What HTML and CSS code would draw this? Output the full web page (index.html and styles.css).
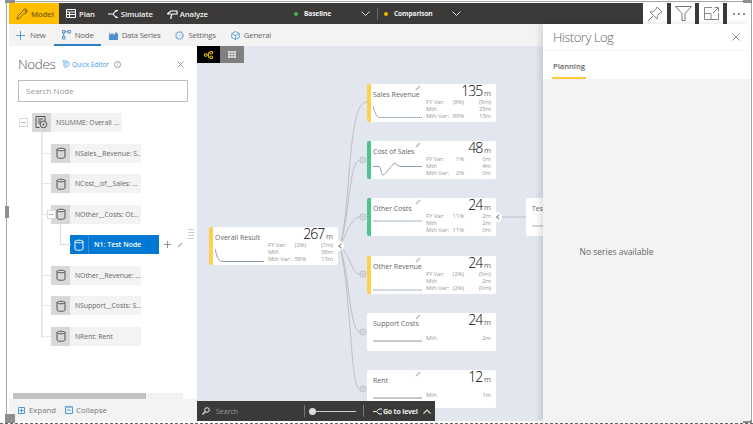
FILE: index.html
```html
<!DOCTYPE html>
<html lang="en">
<head>
    <meta charset="UTF-8">
    <title>Model - History Log</title>
    <link rel="stylesheet" href="styles.css">
</head>
<body>
<svg class="defs" width="0" height="0">
    <symbol id="cyl" viewBox="0 0 10 12">
        <path d="M1 2.5C1 .8 9 .8 9 2.5V10C9 11.7 1 11.7 1 10ZM1 2.5C1 4.2 9 4.2 9 2.5" fill="none" stroke="currentColor" stroke-width="1"/>
    </symbol>
    <symbol id="pen" viewBox="0 0 6 6">
        <path d="M.5 5.5L1 4 4.5 .5 5.5 1.5 2 5Z" fill="#bbb"/>
    </symbol>
    <symbol id="add" viewBox="0 0 8 8">
        <circle cx="4" cy="4" r="3" fill="#e1e6ef" stroke="#b4b4b8" stroke-width=".8"/>
        <path d="M2.5 4H5.5M4 2.5V5.5" stroke="#b4b4b8" stroke-width=".6"/>
    </symbol>
</svg>

<div class="page">
    <span class="handle h-tl"></span>
    <span class="handle h-tr"></span>
    <span class="handle h-l"></span>
    <span class="handle h-bl"></span>
    <span class="handle h-br"></span>

    <div class="frame">
        <div class="topbar">
            <div class="menu">
                <div class="tab active">
                    <svg width="12" height="12" viewBox="0 0 12 12"><path d="M1 11L2 8 7 3C7 1.5 9 .5 10.5 1.2L9 3 9.5 3.8 11 2.5C11.5 4.5 9.5 6 8 5.5L3.5 10.5Z" fill="none" stroke="#6b5310" stroke-width=".9"/></svg>
                    <span>Model</span>
                </div>
                <div class="tab">
                    <svg width="10" height="9" viewBox="0 0 10 9"><path d="M.5 .5H9.5V8.5H.5ZM.5 3H9.5M.5 5.5H9.5M3.5 3V8.5" fill="none" stroke="#fff" stroke-width="1"/></svg>
                    <span>Plan</span>
                </div>
                <div class="tab">
                    <svg width="11" height="10" viewBox="0 0 11 10"><path d="M0 5H5M5 5L8 1.5H10M5 5L8 8.5H10M8 1.5V3M8 8.5V7" fill="none" stroke="#fff" stroke-width="1.1"/></svg>
                    <span>Simulate</span>
                </div>
                <div class="tab">
                    <svg width="11" height="10" viewBox="0 0 11 10"><path d="M0 5L4 2H10V5H5L4 8V10M4 5H1" fill="none" stroke="#fff" stroke-width="1.2"/></svg>
                    <span>Analyze</span>
                </div>
                <div class="scenario baseline">
                    <i class="dot green"></i><b>Baseline</b>
                    <svg width="9" height="5" viewBox="0 0 9 5"><path d="M.5 .5L4.5 4.5 8.5 .5" fill="none" stroke="#ddd"/></svg>
                </div>
                <div class="scenario comparison">
                    <i class="dot amber"></i><b>Comparison</b>
                    <svg width="9" height="5" viewBox="0 0 9 5"><path d="M.5 .5L4.5 4.5 8.5 .5" fill="none" stroke="#ddd"/></svg>
                </div>
            </div>
            <div class="actions">
                <div class="act">
                    <svg width="16" height="16" viewBox="0 0 16 16"><path d="M10 1L15 6 13.5 6.5 10.5 9.5 10 13 3 6 6.5 5.5 9.5 2.5ZM6 10L1 15" fill="none" stroke="#777" stroke-width=".9"/></svg>
                </div>
                <div class="act">
                    <svg width="17" height="15" viewBox="0 0 17 15"><path d="M.5 .5H16.5L10 7.5V14.5H7V7.5Z" fill="none" stroke="#777"/></svg>
                </div>
                <div class="act">
                    <svg width="15" height="13" viewBox="0 0 15 13"><path d="M8 .5H.5V12.5H14.5V6M.5 6.5H7V12.5M9 6L14.5 .5M10.5 .5H14.5V4.5" fill="none" stroke="#888"/></svg>
                </div>
                <div class="act">
                    <span class="dots"><i></i><i></i><i></i></span>
                </div>
            </div>
        </div>

        <div class="body">
            <div class="workspace">
                <div class="toolbar">
                    <div class="tool">
                        <svg width="9" height="9" viewBox="0 0 9 9"><path d="M4.5 0V9M0 4.5H9" stroke="#5b9bd5"/></svg>
                        <span>New</span>
                    </div>
                    <div class="tool on">
                        <svg width="9" height="10" viewBox="0 0 9 10"><path d="M.5 .5H3V3H.5ZM6 .5H8.5V3H6ZM.5 6.5H3V9H.5ZM1.7 3V6.5M3 1.7H6" fill="none" stroke="#3f86c7" stroke-width=".9"/></svg>
                        <span>Node</span>
                    </div>
                    <div class="tool">
                        <svg width="9" height="9" viewBox="0 0 9 9"><path d="M0 0V9H9V3L7 1 5 4 3 2 1 4Z" fill="#4f8fcb"/></svg>
                        <span>Data Series</span>
                    </div>
                    <div class="tool">
                        <svg width="9" height="9" viewBox="0 0 9 9"><circle cx="4.5" cy="4.5" r="3.5" fill="none" stroke="#69a3d8" stroke-width="1.6" stroke-dasharray="1.3 .6"/><circle cx="4.5" cy="4.5" r="1.2" fill="#cfe0f0"/></svg>
                        <span>Settings</span>
                    </div>
                    <div class="tool">
                        <svg width="9" height="9" viewBox="0 0 9 9"><path d="M4.5 .5L8.3 2.5V6.5L4.5 8.5 .7 6.5V2.5ZM.7 2.5L4.5 4.5 8.3 2.5M4.5 4.5V8.5" fill="none" stroke="#5b9bd5" stroke-width=".9"/></svg>
                        <span>General</span>
                    </div>
                </div>

                <div class="main">
                    <div class="nodes">
                        <div class="nodes-head">
                            <h2>Nodes</h2>
                            <svg class="quick-icon" width="8" height="8" viewBox="0 0 8 8"><path d="M0 1H5L7.5 4 5 7H2M1 3H5.5M1 5H4.5" fill="none" stroke="#3f9ae0" stroke-width=".8"/></svg>
                            <span class="quick">Quick Editor</span>
                            <span class="info">i</span>
                            <svg class="close" width="7" height="7" viewBox="0 0 7 7"><path d="M.5 .5L6.5 6.5M6.5 .5L.5 6.5" stroke="#888" stroke-width=".8"/></svg>
                        </div>
                        <div class="search-node">Search Node</div>

                        <div class="tree">
                            <div class="tn root">
                                <span class="toggle"></span>
                                <span class="ico">
                                    <svg width="13" height="13" viewBox="0 0 13 13"><path d="M1 .5H10V5M4.5 11.5H1V.5M3 3H8M3 5H6M3 7H5" fill="none" stroke="#555"/><circle cx="8.5" cy="8.5" r="3.3" fill="none" stroke="#555"/><circle cx="8.5" cy="8.5" r="1" fill="#555"/></svg>
                                </span>
                                <span class="lbl">NSUMME: Overall ...</span>
                            </div>
                            <div class="tn child">
                                <span class="ico"><svg width="10" height="12"><use href="#cyl"/></svg></span>
                                <span class="lbl">NSales__Revenue: S...</span>
                            </div>
                            <div class="tn child">
                                <span class="ico"><svg width="10" height="12"><use href="#cyl"/></svg></span>
                                <span class="lbl">NCost__of__Sales: ...</span>
                            </div>
                            <div class="tn child parent">
                                <span class="toggle"></span>
                                <span class="ico"><svg width="10" height="12"><use href="#cyl"/></svg></span>
                                <span class="lbl">NOther__Costs: Ot...</span>
                            </div>
                            <div class="tn leaf">
                                <span class="ico"><svg width="10" height="12"><use href="#cyl"/></svg></span>
                                <span class="lbl">N1: Test Node</span>
                                <svg class="leaf-add" width="7" height="7" viewBox="0 0 8 8"><path d="M4 0V8M0 4H8" stroke="#777" stroke-width=".9"/></svg>
                                <svg class="leaf-pen" width="6" height="6"><use href="#pen"/></svg>
                                <span class="grip"></span>
                            </div>
                            <div class="tn child">
                                <span class="ico"><svg width="10" height="12"><use href="#cyl"/></svg></span>
                                <span class="lbl">NOther__Revenue: ...</span>
                            </div>
                            <div class="tn child">
                                <span class="ico"><svg width="10" height="12"><use href="#cyl"/></svg></span>
                                <span class="lbl">NSupport__Costs: S...</span>
                            </div>
                            <div class="tn child last">
                                <span class="ico"><svg width="10" height="12"><use href="#cyl"/></svg></span>
                                <span class="lbl">NRent: Rent</span>
                            </div>
                        </div>

                        <div class="hscroll"><div class="thumb"></div></div>
                        <div class="nodes-foot">
                            <svg width="7" height="7" viewBox="0 0 7 7"><path d="M.5 .5H6.5V6.5H.5ZM3.5 1.5V5.5M1.5 3.5H5.5" fill="none" stroke="#4a9ad8"/></svg>
                            <span>Expand</span>
                            <svg class="foot-second" width="8" height="8" viewBox="0 0 8 8"><path d="M.5 .5H7.5V7.5H.5ZM2 4H6" fill="none" stroke="#4a9ad8"/><path d="M.5 .5H7.5V2H.5Z" fill="#8fc0e6"/></svg>
                            <span>Collapse</span>
                        </div>
                    </div>

                    <div class="canvas">
                        <div class="view-switch">
                            <span class="vs on">
                                <svg width="9" height="8" viewBox="0 0 9 8"><path d="M.5 2.8H3V5.2H.5ZM6 .5H8.5V2.8H6ZM6 5.2H8.5V7.5H6ZM3 4H4.5V1.7H6M4.5 4V6.3H6" fill="none" stroke="#f2c811" stroke-width=".9"/></svg>
                            </span>
                            <span class="vs">
                                <svg width="8" height="7" viewBox="0 0 8 7"><path d="M0 0H8V7H0Z" fill="#ddd"/><path d="M0 2.3H8M0 4.6H8M2.7 0V7M5.3 0V7" stroke="#808080" stroke-width=".5"/></svg>
                            </span>
                        </div>

                        <svg class="links" width="346" height="375" viewBox="197 46 346 375">
                            <g fill="none" stroke="#bcbfc6" stroke-width="1">
                                <path d="M340 246C352 200 347 102 367 102"/>
                                <path d="M340 246C350 215 349 160 360 160"/>
                                <path d="M340 246C348 230 352 217 360 217"/>
                                <path d="M340 246C350 255 352 274 360 274"/>
                                <path d="M340 246C350 280 350 332 360 332"/>
                                <path d="M340 246C352 300 350 389 360 389"/>
                                <path d="M501 217H526"/>
                            </g>
                            <use href="#add" x="359" y="156" width="8" height="8"/>
                            <use href="#add" x="359" y="213" width="8" height="8"/>
                            <use href="#add" x="359" y="270" width="8" height="8"/>
                            <use href="#add" x="359" y="328" width="8" height="8"/>
                            <use href="#add" x="359" y="385" width="8" height="8"/>
                        </svg>

                        <div class="card amber n-overall">
                            <div class="card-l">
                                <div class="title">Overall Result</div>
                                <svg class="spark" width="49" height="14" viewBox="0 0 49 14"><path d="M0 0C2 7 3 12 7 12.5H49" fill="none" stroke="#7d94a8" stroke-width=".9"/></svg>
                            </div>
                            <div class="card-r">
                                <div class="big">267<small>m</small></div>
                                <div class="row"><span>FY Var:</span><span>(2%)</span><span>(7m)</span></div>
                                <div class="row"><span>Mth</span><span></span><span>38m</span></div>
                                <div class="row"><span>Mth Var:</span><span>58%</span><span>13m</span></div>
                            </div>
                            <span class="fold"></span>
                        </div>

                        <div class="card amber n-sales">
                            <svg class="pen" width="6" height="6"><use href="#pen"/></svg>
                            <div class="card-l">
                                <div class="title">Sales Revenue</div>
                                <svg class="spark" width="49" height="14" viewBox="0 0 49 14"><path d="M0 0C2 6 3 11 6 11.5H49" fill="none" stroke="#7d94a8" stroke-width=".9" stroke-dasharray="1.5 .4"/></svg>
                            </div>
                            <div class="card-r">
                                <div class="big">135<small>m</small></div>
                                <div class="row"><span>FY Var:</span><span>(8%)</span><span>(9m)</span></div>
                                <div class="row"><span>Mth</span><span></span><span>25m</span></div>
                                <div class="row"><span>Mth Var:</span><span>99%</span><span>13m</span></div>
                            </div>
                        </div>

                        <div class="card green n-cost">
                            <svg class="pen" width="6" height="6"><use href="#pen"/></svg>
                            <div class="card-l">
                                <div class="title">Cost of Sales</div>
                                <svg class="spark" width="49" height="14" viewBox="0 0 49 14"><path d="M0 3.5H6C8 4 8 12 10 12 13 12 18 1 22 .5 24 1 25 3.5 28 3.5H49" fill="none" stroke="#7d94a8" stroke-width=".9"/></svg>
                            </div>
                            <div class="card-r">
                                <div class="big">48<small>m</small></div>
                                <div class="row"><span>FY Var:</span><span>1%</span><span>0m</span></div>
                                <div class="row"><span>Mth</span><span></span><span>4m</span></div>
                                <div class="row"><span>Mth Var:</span><span>2%</span><span>0m</span></div>
                            </div>
                        </div>

                        <div class="card green n-other">
                            <svg class="pen" width="6" height="6"><use href="#pen"/></svg>
                            <div class="card-l">
                                <div class="title">Other Costs</div>
                                <svg class="spark" width="49" height="14" viewBox="0 0 49 14"><path d="M0 1H49" fill="none" stroke="#7d94a8" stroke-width=".9" stroke-dasharray="1.5 .4"/></svg>
                            </div>
                            <div class="card-r">
                                <div class="big">24<small>m</small></div>
                                <div class="row"><span>FY Var:</span><span>11%</span><span>2m</span></div>
                                <div class="row"><span>Mth</span><span></span><span>2m</span></div>
                                <div class="row"><span>Mth Var:</span><span>11%</span><span>0m</span></div>
                            </div>
                            <span class="fold"></span>
                        </div>

                        <div class="card amber n-revenue">
                            <svg class="pen" width="6" height="6"><use href="#pen"/></svg>
                            <div class="card-l">
                                <div class="title">Other Revenue</div>
                                <svg class="spark" width="49" height="14" viewBox="0 0 49 14"><path d="M0 12H49" fill="none" stroke="#7d94a8" stroke-width=".9" stroke-dasharray="1.5 .4"/></svg>
                            </div>
                            <div class="card-r">
                                <div class="big">24<small>m</small></div>
                                <div class="row"><span>FY Var:</span><span>(2%)</span><span>(0m)</span></div>
                                <div class="row"><span>Mth</span><span></span><span>2m</span></div>
                                <div class="row"><span>Mth Var:</span><span>(2%)</span><span>(0m)</span></div>
                            </div>
                        </div>

                        <div class="card n-support">
                            <svg class="pen" width="6" height="6"><use href="#pen"/></svg>
                            <div class="card-l">
                                <div class="title">Support Costs</div>
                                <svg class="spark" width="49" height="14" viewBox="0 0 49 14"><path d="M0 6H49" fill="none" stroke="#777" stroke-width=".8"/></svg>
                            </div>
                            <div class="card-r">
                                <div class="big">24<small>m</small></div>
                                <div class="row blank"></div>
                                <div class="row"><span>Mth</span><span></span><span>2m</span></div>
                            </div>
                        </div>

                        <div class="card n-rent">
                            <svg class="pen" width="6" height="6"><use href="#pen"/></svg>
                            <div class="card-l">
                                <div class="title">Rent</div>
                                <svg class="spark" width="49" height="14" viewBox="0 0 49 14"><path d="M0 6H49" fill="none" stroke="#777" stroke-width=".8"/></svg>
                            </div>
                            <div class="card-r">
                                <div class="big">12<small>m</small></div>
                                <div class="row blank"></div>
                                <div class="row"><span>Mth</span><span></span><span>1m</span></div>
                            </div>
                        </div>

                        <div class="card n-test">
                            <div class="card-l">
                                <div class="title">Test Node</div>
                                <svg class="spark" width="49" height="14" viewBox="0 0 49 14"><path d="M0 6H49" fill="none" stroke="#999" stroke-width=".8"/></svg>
                            </div>
                        </div>

                        <div class="searchbar">
                            <svg width="8" height="8" viewBox="0 0 8 8"><circle cx="5" cy="3" r="2.3" fill="none" stroke="#eee"/><path d="M3.3 4.7L.5 7.5" stroke="#eee" stroke-width="1.2"/></svg>
                            <span class="sb-search">Search</span>
                            <i class="sb-sep"></i>
                            <div class="slider"><i></i></div>
                            <i class="sb-sep"></i>
                            <svg class="sb-go" width="9" height="7" viewBox="0 0 9 7"><path d="M0 3.5H3.5M3.5 3.5L6 1H9M3.5 3.5L6 6H9" fill="none" stroke="#eee"/></svg>
                            <b>Go to level</b>
                            <svg class="sb-up" width="8" height="5" viewBox="0 0 8 5"><path d="M.5 4.5L4 1 7.5 4.5" fill="none" stroke="#ddd" stroke-width="1.1"/></svg>
                        </div>
                    </div>
                </div>
            </div>

            <div class="history">
                <div class="history-head">
                    <h2>History Log</h2>
                    <svg width="8" height="8" viewBox="0 0 8 8"><path d="M.5 .5L7.5 7.5M7.5 .5L.5 7.5" stroke="#777" stroke-width=".8"/></svg>
                </div>
                <div class="history-tabs"><span>Planning</span></div>
                <div class="history-body">No series available</div>
            </div>
        </div>
    </div>
</div>
</body>
</html>
```

FILE: styles.css
```css
* { box-sizing: border-box; }
html, body { margin: 0; height: 100%; overflow: hidden; }
body { background: #fff; font-family: "Open Sans", "Noto Sans", sans-serif; color: #555; }
.defs { position: absolute; }
i { display: block; }

/* visual border and resize handles */
.page { position: relative; width: 753px; height: 424px; padding: 1px 1px 0 6px; border-bottom: 1px dashed #666; }
.handle { position: absolute; background: #8f8f8f; }
.h-tl { left: 5px; top: 0; width: 10px; height: 3px; }
.h-tr { left: 743px; top: 0; width: 9px; height: 3px; }
.h-l { left: 5px; top: 206px; width: 4px; height: 12px; }
.h-bl { left: 5px; top: 414px; width: 10px; height: 9px; }
.h-br { left: 743px; top: 420px; width: 9px; height: 3px; }
.frame { width: 746px; height: 422px; border: 1px solid #a6a6a6; border-bottom: 0; padding: 1px 1px 2px 2px; display: flex; flex-direction: column; }

/* top bar */
.topbar { height: 21px; flex: none; display: flex; }
.menu { flex: 1; background: #3b3a39; display: flex; align-items: center; color: #f1f1f1; font-size: 7.8px; font-weight: 600; letter-spacing: -.15px; }
.tab { height: 100%; display: flex; align-items: center; gap: 2px; margin-right: 14px; white-space: nowrap; }
.tab:nth-child(2) { gap: 3px; margin-right: 13px; }
.tab.active { width: 50px; background: #ffbf00; color: #7a6212; padding-left: 7px; margin-right: 7px; gap: 3px; }
.scenario { display: flex; align-items: center; color: #eee; font-size: 6.7px; }
.scenario b { font-weight: 700; }
.baseline { margin-left: 72px; width: 84px; border-right: 1px solid #666; height: 12px; }
.baseline b { width: 57px; margin-left: 6px; }
.comparison { margin-left: 6px; }
.comparison b { width: 58px; margin-left: 6px; }
.dot { width: 4px; height: 4px; border-radius: 50%; }
.dot.green { background: #3fb34f; }
.dot.amber { background: #f2b600; }
.actions { width: 107px; flex: none; display: flex; background: #fff; }
.act { width: 28px; flex: none; display: flex; align-items: center; justify-content: center; border-right: 4px solid #3b3a39; }
.act:last-child { border-right: 0; width: 23px; }
.dots { display: flex; gap: 3px; }
.dots i { width: 2px; height: 2px; background: #666; border-radius: 50%; }

/* body */
.body { flex: 1; display: flex; min-height: 0; }
.workspace { flex: 1; min-width: 0; display: flex; flex-direction: column; }
.toolbar { height: 22px; flex: none; background: #f3f3f3; display: flex; padding-left: 7px; font-size: 7.8px; letter-spacing: -.2px; color: #666; }
.tool { display: flex; align-items: center; gap: 4px; white-space: nowrap; }
.tool:first-child { gap: 5px; }
.tool.on { border-bottom: 2px solid #2e7fc1; padding: 2px 7px 0 8px; margin-left: 8px; }
.tool:nth-child(3) { margin-left: 8px; }
.tool:nth-child(4) { margin-left: 15px; }
.tool:nth-child(5) { margin-left: 15px; }
.main { flex: 1; min-height: 0; display: flex; }

/* nodes panel */
.nodes { width: 188px; flex: none; background: #fff; display: flex; flex-direction: column; }
.nodes-head { display: flex; align-items: center; height: 34px; padding: 2px 13px 0 9px; }
.nodes-head h2 { margin: 0; font-size: 13.5px; font-weight: 300; letter-spacing: -.4px; color: #555; width: 44px; flex: none; }
.quick { font-size: 6.5px; color: #3f9ae0; margin-left: 2px; white-space: nowrap; }
.info { margin-left: 5px; width: 7px; height: 7px; flex: none; border: 1px solid #999; border-radius: 50%; font-size: 5px; line-height: 5px; text-align: center; color: #888; }
.close { margin-left: auto; }
.search-node { margin-left: 9px; width: 170px; height: 22px; flex: none; border: 1px solid #bdbdbd; padding-left: 7px; font-size: 8px; line-height: 20px; color: #999; }

.tree { flex: 1; min-height: 0; padding-top: 11px; display: flex; flex-direction: column; gap: 11.57px; font-size: 6.8px; }
.tn { position: relative; display: flex; height: 19px; flex: none; }
.tn .ico { width: 19px; height: 19px; flex: none; background: #d8d8d8; color: #555; display: flex; align-items: center; justify-content: center; }
.tn .lbl { width: 71px; background: #f3f3f3; color: #666; padding-left: 5px; line-height: 19px; white-space: nowrap; overflow: hidden; }
.root { margin-left: 23px; }
.child { margin-left: 42px; }
.leaf { margin-left: 61px; }
.leaf .ico, .leaf .lbl { background: #0078d4; color: #fff; }
.leaf .ico { border-right: 1px solid #2f8fda; }
.leaf .lbl { width: 70px; font-weight: 600; font-size: 7px; }
.leaf-add { margin: 6px 0 0 5px; }
.leaf-pen { margin: 7px 0 0 6px; }
.grip { position: absolute; left: 118px; top: -6px; width: 6px; height: 10px; background: repeating-linear-gradient(#ccc 0 1px, #fff 1px 3px); }

/* tree guide lines */
.root .toggle, .parent .toggle { position: absolute; width: 9px; height: 9px; top: 5px; border: 1px solid #d8d8d8; background: #fff; z-index: 1; }
.root .toggle { left: -13px; }
.parent .toggle { left: -4px; }
.root .toggle::after, .parent .toggle::after { content: ""; position: absolute; left: 1px; right: 1px; top: 3px; height: 1px; background: #bbb; }
.root::after { content: ""; position: absolute; left: 9px; top: 19px; width: 2px; height: 206px; background: #e8e8e8; }
.child::before { content: ""; position: absolute; left: -9px; top: 9px; width: 9px; height: 1px; background: #e4e4e4; }
.leaf::before { content: ""; position: absolute; left: -10px; top: -11px; width: 10px; height: 20px; border-left: 1px solid #ddd; border-bottom: 1px solid #ddd; }

.hscroll { margin-left: 4px; width: 170px; height: 6px; flex: none; background: #f1f1f1; }
.thumb { width: 133px; height: 6px; background: #c1c1c1; }
.nodes-foot { height: 22px; flex: none; background: #f3f3f3; display: flex; align-items: center; padding-left: 9px; gap: 4px; font-size: 7.8px; color: #777; }
.foot-second { margin-left: 5px; margin-right: -1px; }

/* canvas, free layout of the tree diagram */
.canvas { position: relative; flex: 1; min-width: 0; background: #e1e6ef; overflow: hidden; }
.view-switch { display: flex; position: absolute; left: 0; top: 0; }
.vs { width: 24px; height: 17px; background: #808080; display: flex; align-items: center; justify-content: center; }
.vs.on { width: 23px; background: #000; }
.links { position: absolute; left: 0; top: 0; }

.card { position: absolute; width: 129px; height: 38px; background: #fff; border-left: 4px solid #fff; border-radius: 2px; display: flex; }
.card.amber { border-left-color: #ffd04c; }
.card.green { border-left-color: #4cc58a; }
.n-overall { left: 12px; top: 181px; }
.n-sales { left: 170px; top: 38px; }
.n-cost { left: 170px; top: 95px; }
.n-other { left: 170px; top: 152px; }
.n-revenue { left: 170px; top: 210px; }
.n-support { left: 170px; top: 267px; }
.n-rent { left: 170px; top: 324px; }
.n-test { left: 329px; top: 152px; }

.card-l { width: 55px; flex: none; padding: 6px 0 0 2px; position: relative; }
.title { font-size: 7px; line-height: 10px; color: #666; white-space: nowrap; }
.spark { position: absolute; left: 2px; top: 22px; }
.card-r { flex: 1; min-width: 0; padding-right: 5px; font-size: 6px; letter-spacing: -.1px; color: #999; }
.big { height: 14.5px; text-align: right; font-size: 14px; font-weight: 300; letter-spacing: -1.1px; line-height: 13px; color: #000; }
.big small { font-size: 7.5px; font-weight: 400; letter-spacing: 0; color: #666; margin-left: 2px; }
.row { height: 7px; line-height: 7px; display: grid; grid-template-columns: 24px 14px 1fr; white-space: nowrap; }
.row span:nth-child(2), .row span:nth-child(3) { text-align: right; }
.pen { position: absolute; right: 75px; top: 1px; }
.fold { position: absolute; left: 125px; top: 14px; width: 6px; height: 10px; background: #fff; border-radius: 0 5px 5px 0; }
.fold::after { content: ""; position: absolute; left: 1px; top: 3px; width: 3px; height: 3px; border-left: 1px solid #888; border-bottom: 1px solid #888; transform: rotate(45deg); }

.searchbar { position: absolute; left: 0; bottom: 0; width: 238px; height: 20px; background: #3b3a39; display: flex; align-items: center; padding-left: 5px; color: #eee; font-size: 7px; }
.sb-search { color: #999; margin-left: 6px; width: 81px; }
.sb-sep { width: 1px; height: 12px; background: #777; margin-left: 7px; }
.slider { position: relative; width: 47px; height: 1px; background: #ccc; margin-left: 4px; }
.slider i { position: absolute; left: 0; top: -3px; width: 7px; height: 7px; border-radius: 50%; background: #ddd; }
.sb-go { margin-left: 9px; margin-right: 1px; }
.searchbar b { font-weight: 700; white-space: nowrap; letter-spacing: -.2px; }
.sb-up { margin-left: 5px; }

/* history panel */
.history { width: 207px; flex: none; position: relative; background: #fff; box-shadow: -3px 0 6px rgba(0, 0, 0, .13); display: flex; flex-direction: column; }
.history-head { height: 27px; flex: none; display: flex; align-items: center; justify-content: space-between; padding: 0 10px; border-bottom: 1px solid #f5f5f5; }
.history-head h2 { margin: 0; font-size: 13px; font-weight: 300; letter-spacing: -.5px; color: #666; }
.history-tabs { height: 28px; flex: none; display: flex; padding: 8px 0 0 9px; }
.history-tabs span { height: 20px; line-height: 15px; font-size: 7.6px; font-weight: 600; color: #666; border-bottom: 2px solid #ffc83d; padding: 0 1px; }
.history-body { flex: 1; background: #f3f3f3; display: flex; align-items: center; justify-content: center; font-size: 8.5px; color: #666; padding: 2px 60px 0 0; }
```
